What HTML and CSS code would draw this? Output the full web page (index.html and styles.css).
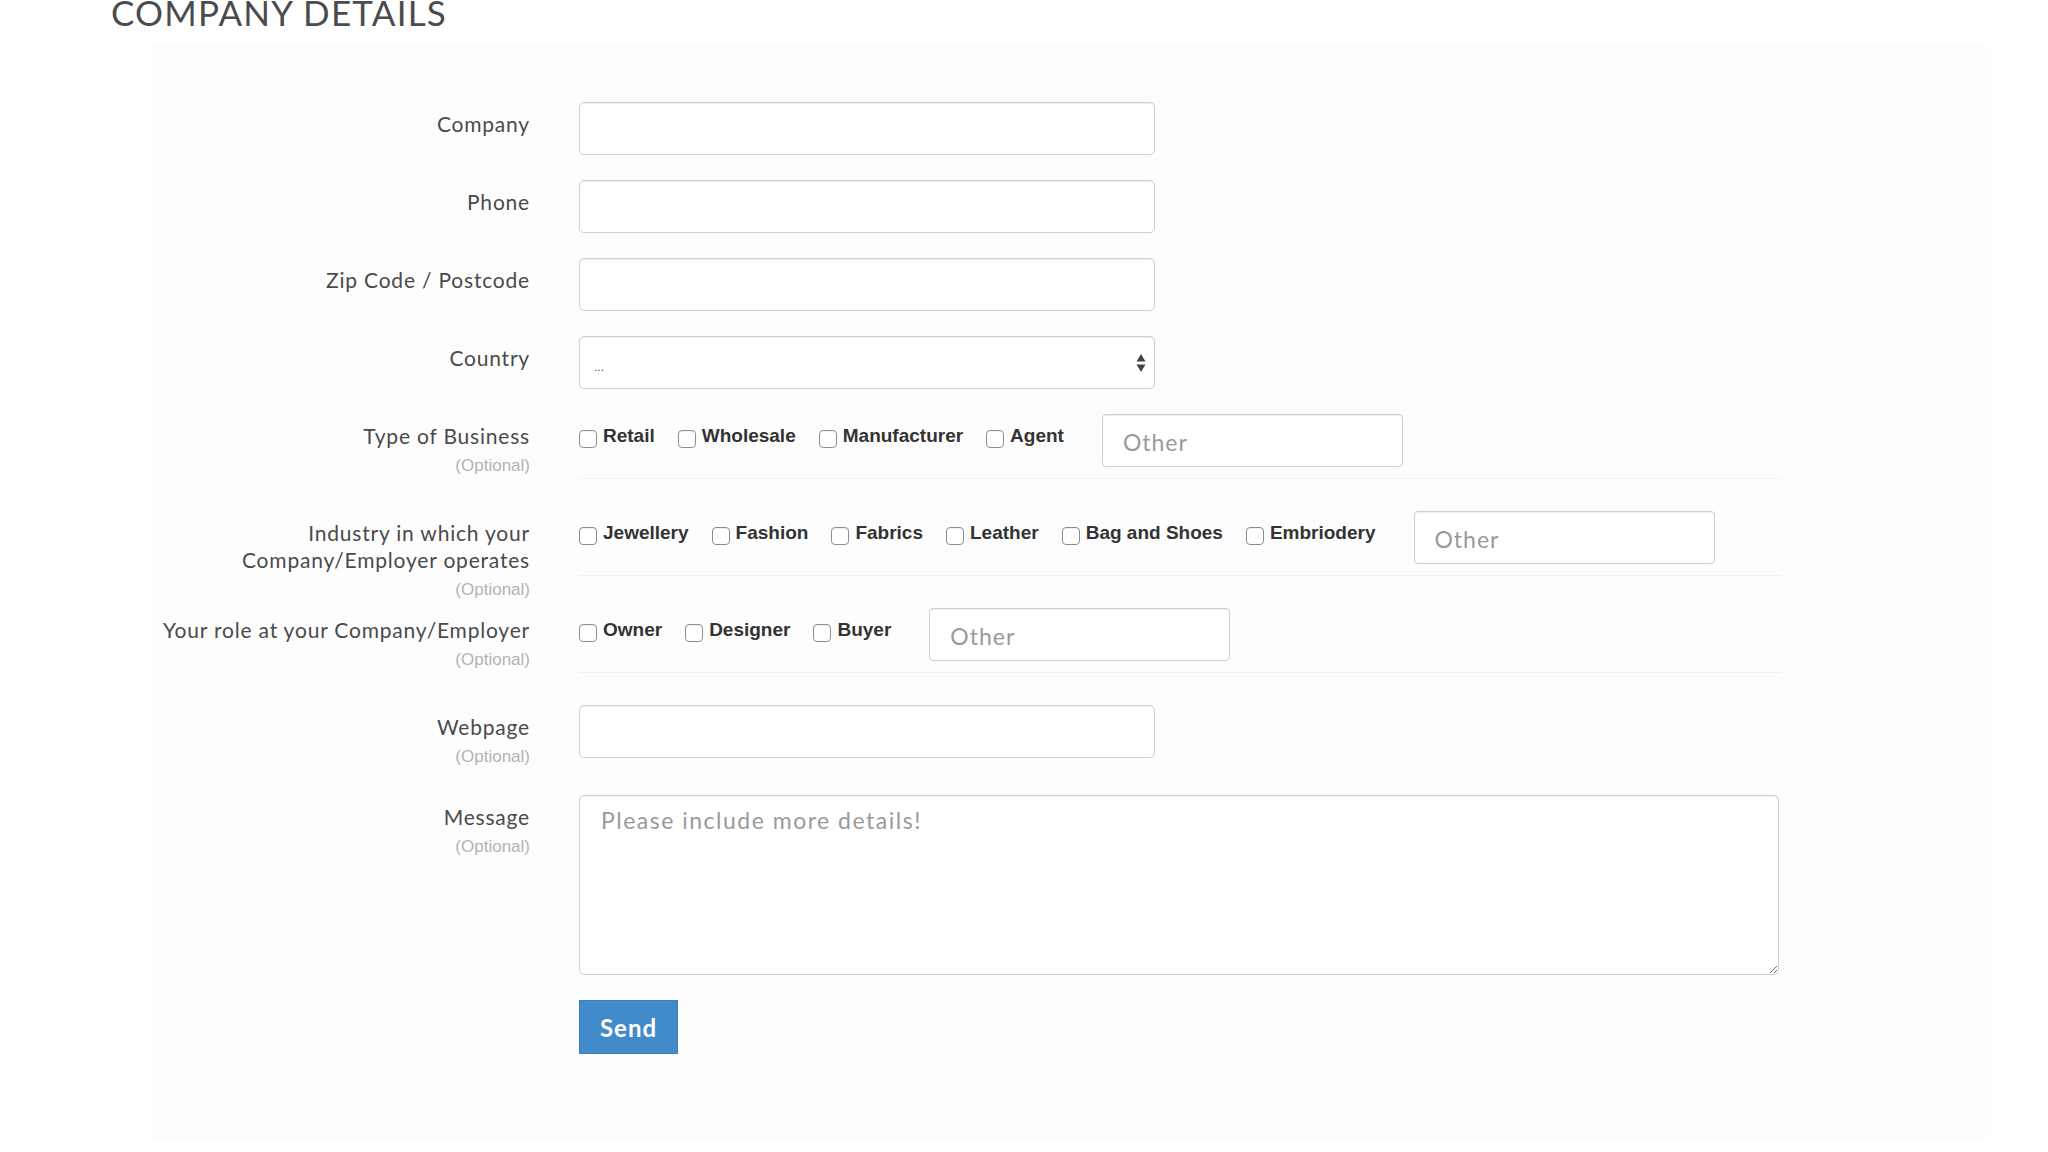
FILE: index.html
```html
<!DOCTYPE html>
<html lang="en">
<head>
<meta charset="utf-8">
<title>Company Details</title>
<link rel="stylesheet" href="styles.css">
</head>
<body>
<div class="page">
  <h2 class="title">COMPANY DETAILS</h2>
  <form class="panel">
    <div class="row">
      <label class="lbl">Company</label>
      <div class="ctrl"><input class="field" type="text"></div>
    </div>
    <div class="row">
      <label class="lbl">Phone</label>
      <div class="ctrl"><input class="field" type="text"></div>
    </div>
    <div class="row">
      <label class="lbl">Zip Code / Postcode</label>
      <div class="ctrl"><input class="field" type="text"></div>
    </div>
    <div class="row">
      <label class="lbl">Country</label>
      <div class="ctrl">
        <div class="select-wrap">
          <select class="field select"><option>...</option></select>
          <svg class="arrows" width="10" height="20" viewBox="0 0 10 20"><path d="M5 1 L9.5 8.5 L0.5 8.5 Z M5 19 L9.5 11.5 L0.5 11.5 Z" fill="#444"/></svg>
        </div>
      </div>
    </div>
    <div class="row row-gap">
      <label class="lbl">Type of Business<span class="opt">(Optional)</span></label>
      <div class="ctrl">
        <div class="checks">
          <label class="cb"><input type="checkbox"><span>Retail</span></label>
          <label class="cb"><input type="checkbox"><span>Wholesale</span></label>
          <label class="cb"><input type="checkbox"><span>Manufacturer</span></label>
          <label class="cb"><input type="checkbox"><span>Agent</span></label>
          <input class="field other" type="text" placeholder="Other">
        </div>
        <div class="sep"></div>
      </div>
    </div>
    <div class="row">
      <label class="lbl lbl-over">Industry in which your<br>Company/Employer operates<span class="opt">(Optional)</span></label>
      <div class="ctrl">
        <div class="checks">
          <label class="cb"><input type="checkbox"><span>Jewellery</span></label>
          <label class="cb"><input type="checkbox"><span>Fashion</span></label>
          <label class="cb"><input type="checkbox"><span>Fabrics</span></label>
          <label class="cb"><input type="checkbox"><span>Leather</span></label>
          <label class="cb"><input type="checkbox"><span>Bag and Shoes</span></label>
          <label class="cb"><input type="checkbox"><span>Embriodery</span></label>
          <input class="field other" type="text" placeholder="Other">
        </div>
        <div class="sep"></div>
      </div>
    </div>
    <div class="row">
      <label class="lbl">Your role at your Company/Employer<span class="opt">(Optional)</span></label>
      <div class="ctrl">
        <div class="checks">
          <label class="cb"><input type="checkbox"><span>Owner</span></label>
          <label class="cb"><input type="checkbox"><span>Designer</span></label>
          <label class="cb"><input type="checkbox"><span>Buyer</span></label>
          <input class="field other" type="text" placeholder="Other">
        </div>
        <div class="sep"></div>
      </div>
    </div>
    <div class="row">
      <label class="lbl">Webpage<span class="opt">(Optional)</span></label>
      <div class="ctrl"><input class="field" type="text"></div>
    </div>
    <div class="row">
      <label class="lbl">Message<span class="opt">(Optional)</span></label>
      <div class="ctrl"><textarea class="field area" placeholder="Please include more details!"></textarea></div>
    </div>
    <div class="row">
      <div class="lbl lbl-empty"></div>
      <div class="ctrl"><button class="send" type="button">Send</button></div>
    </div>
  </form>
</div>
</body>
</html>
```
FILE: styles.css
```css
html, body {
  margin: 0;
  background: #ffffff;
}
body {
  font-family: Lato, "Noto Sans", sans-serif;
  color: #4a4a4c;
}
.page {
  padding-left: 111px;
  min-height: 1152px;
  box-sizing: border-box;
}
.title {
  margin: -9px 0 0 0;
  font-size: 35px;
  line-height: 42px;
  font-weight: 400;
  color: #4b4b4e;
  letter-spacing: 1.2px;
}
.panel {
  margin: 12px 0 0 39px;
  padding: 57px 0 60px 0;
  width: 1840px;
  background: #fdfdfd;
}
.row {
  display: flex;
  align-items: flex-start;
  margin-bottom: 25px;
}
.row-gap {
  margin-top: 3px;
}
.lbl {
  flex: none;
  width: 380px;
  box-sizing: border-box;
  padding: 8px 0 0 0;
  text-align: right;
  font-size: 21px;
  line-height: 27px;
  letter-spacing: 0.8px;
  color: #4a4a4c;
  white-space: nowrap;
}
.lbl-over {
  margin-bottom: -20px;
}
.lbl-empty {
  padding: 0;
}
.opt {
  display: block;
  margin-top: 3px;
  font-family: "Liberation Sans", Arial, sans-serif;
  font-size: 17px;
  line-height: 27px;
  letter-spacing: 0;
  color: #b3b3b3;
}
.ctrl {
  margin-left: 49px;
  width: 1202px;
}
.field {
  display: block;
  width: 576px;
  height: 53px;
  box-sizing: border-box;
  border: 1px solid #cfcfcf;
  border-radius: 5px;
  background: #fff;
  box-shadow: inset 0 1px 1px rgba(0, 0, 0, 0.07);
  font-family: Lato, "Noto Sans", sans-serif;
  font-size: 23px;
  letter-spacing: 1px;
  color: #555;
  padding: 0 20px;
  outline: none;
}
.field::placeholder {
  color: #9a9a9a;
}
.select-wrap {
  position: relative;
  width: 576px;
}
.select {
  appearance: none;
  -webkit-appearance: none;
  font-family: "Liberation Sans", Arial, sans-serif;
  font-size: 12px;
  letter-spacing: 0;
  color: #555;
  padding: 8px 14px 0 14px;
}
.arrows {
  position: absolute;
  right: 9px;
  top: 17px;
}
.checks {
  display: flex;
  align-items: flex-start;
  gap: 23px;
}
.cb {
  display: flex;
  align-items: flex-start;
  gap: 6px;
  padding-top: 8px;
  font-family: "Liberation Sans", Arial, sans-serif;
  font-weight: 700;
  font-size: 19px;
  line-height: 27px;
  color: #333;
  white-space: nowrap;
}
.cb input {
  appearance: none;
  -webkit-appearance: none;
  margin: 8px 0 0 0;
  width: 18px;
  height: 18px;
  box-sizing: border-box;
  border: 1px solid #8f8f8f;
  border-radius: 4px;
  background: #fff;
  box-shadow: inset 0 1px 1px rgba(0, 0, 0, 0.06);
  flex: none;
}
.other {
  width: 301px;
  margin-left: 15px;
  border-radius: 4px;
  padding-top: 2px;
}
.sep {
  height: 1px;
  margin: 11px 0 7px 0;
  background: #f1f1f1;
}
.area {
  width: 1200px;
  height: 180px;
  padding: 9px 21px;
  line-height: 30px;
  letter-spacing: 1.5px;
  resize: vertical;
}
.send {
  display: block;
  width: 99px;
  height: 54px;
  border: 1px solid #3a7fc0;
  border-radius: 0;
  background: #428bca;
  color: #fff;
  font-family: Lato, "Noto Sans", sans-serif;
  font-size: 24px;
  font-weight: 700;
  letter-spacing: 1px;
  padding: 0;
}
```
